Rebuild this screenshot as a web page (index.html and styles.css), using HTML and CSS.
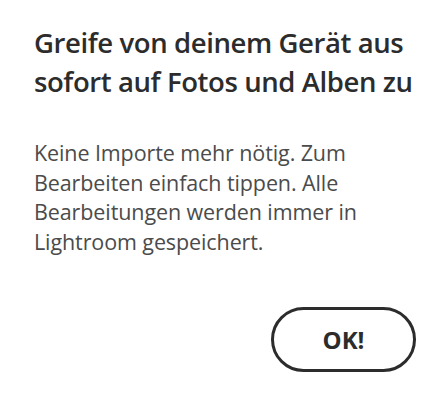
FILE: index.html
```html
<!DOCTYPE html>
<html lang="de">
<head>
<meta charset="utf-8">
<link rel="stylesheet" href="styles.css">
</head>
<body>
<div class="dialog">
  <h1 class="title">Greife von deinem Gerät aus<br>sofort auf Fotos und Alben zu</h1>
  <p class="text">Keine Importe mehr nötig. Zum<br>Bearbeiten einfach tippen. Alle<br>Bearbeitungen werden immer in<br>Lightroom gespeichert.</p>
  <div class="actions">
    <button class="ok">OK!</button>
  </div>
</div>
</body>
</html>
```
FILE: styles.css
```css
html, body {
  margin: 0;
  padding: 0;
  background: #ffffff;
}
.dialog {
  width: 447px;
  height: 400px;
  box-sizing: border-box;
  padding: 23px 31px 0 34px;
  font-family: "Open Sans", sans-serif;
}
.title {
  margin: 0;
  font-size: 27.5px;
  line-height: 39px;
  font-weight: 600;
  color: #2c2c2c;
  letter-spacing: -0.4px;
  white-space: nowrap;
}
.text {
  margin: 37px 0 0 0;
  font-size: 21.5px;
  line-height: 29.5px;
  font-weight: 400;
  color: #4b4b4b;
  letter-spacing: -0.1px;
  white-space: nowrap;
}
.actions {
  display: flex;
  justify-content: flex-end;
  margin-top: 51px;
}
.ok {
  width: 145px;
  height: 65px;
  box-sizing: border-box;
  border: 3px solid #2c2c2c;
  border-radius: 33px;
  background: #fff;
  font-family: "Open Sans", sans-serif;
  font-size: 24px;
  font-weight: 700;
  color: #2c2c2c;
  padding: 0;
}
```
